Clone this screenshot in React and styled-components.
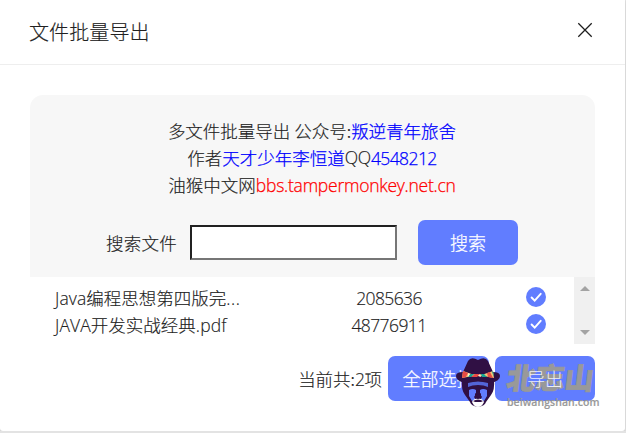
import React from "react";
import styled, { createGlobalStyle } from "styled-components";

const Global = createGlobalStyle`
  * { box-sizing: border-box; }
  body {
    margin: 0;
    background: #e3e3e3;
    overflow: hidden;
    color: #212121;
    font: 300 17.5px/27px "Noto Sans CJK SC", sans-serif;
    -webkit-text-stroke: 0.15px currentColor;
  }
`;

const Dialog = styled.main`
  position: relative;
  width: 625px;
  height: 431px;
  background: #fff;
  border-radius: 0 0 3px 3px;
  box-shadow: 0 1px 3px rgba(0, 0, 0, 0.12);
`;

const Header = styled.header`
  display: flex;
  align-items: center;
  justify-content: space-between;
  height: 65px;
  padding: 0 32px 2px 29px;
  border-bottom: 1px solid #eee;
`;

const Title = styled.h1`
  margin: 0;
  font-size: 20px;
  font-weight: 300;
  letter-spacing: 0.1px;
`;

const CloseButton = styled.button`
  display: flex;
  width: 16px;
  height: 16px;
  padding: 0;
  border: 0;
  background: none;
  margin-top: -2px;
`;

const Body = styled.section`
  padding: 30px 30px 0;
`;

const Panel = styled.div`
  height: 182px;
  padding-top: 22px;
  border-radius: 13px 13px 0 0;
  background: #f7f7f7;
`;

const InfoLine = styled.div`
  display: flex;
  justify-content: center;
  height: 27px;
  padding-right: 1px;
  white-space: pre;
`;

const Colored = styled.span`
  color: ${(p) => p.$color};
  -webkit-text-stroke: 0.25px ${(p) => p.$color};
`;

const Latin = styled.span`
  font-family: "Open Sans", sans-serif;
  font-size: 17.5px;
  letter-spacing: ${(p) => p.$spacing || 0}px;
`;

const SearchRow = styled.form`
  display: flex;
  align-items: center;
  height: 45px;
  margin-top: 22px;
  padding-left: 76px;
`;

const SearchLabel = styled.label`
  width: 84px;
  letter-spacing: 0.25px;
`;

const SearchInput = styled.input`
  width: 207px;
  height: 35px;
  margin-right: 21px;
  border: 2px solid;
  border-color: #212121 #767676 #767676 #212121;
  background: #fff;
  outline: 0;
`;

const Button = styled.button`
  flex: none;
  width: ${(p) => p.$width || 100}px;
  height: 45px;
  padding: 0;
  border: 0;
  border-radius: 7px;
  background: #617dff;
  color: #fff;
  font: 300 18px/27px "Noto Sans CJK SC", sans-serif;
  -webkit-text-stroke: 0.25px #fff;
  white-space: nowrap;
`;

const RaisedLabel = styled.span`
  position: relative;
  z-index: 2;
  opacity: 0.85;
  -webkit-text-stroke: 0;
`;

const ListArea = styled.div`
  display: flex;
  height: 67px;
`;

const List = styled.ul`
  flex: 1;
  margin: 0;
  padding: 7px 0 0 25px;
  list-style: none;
`;

const FileRow = styled.li`
  display: grid;
  grid-template-columns: 248px 172px 1fr;
  height: 27px;
`;

const FileSize = styled.div`
  text-align: center;
`;

const CheckCell = styled.div`
  padding: 3px 0 0 51px;
  line-height: 0;
`;

const Scrollbar = styled.div`
  display: flex;
  flex-direction: column;
  align-items: center;
  justify-content: space-between;
  width: 21px;
  padding: 9px 0;
  background: #f0f0f0;
`;

const Footer = styled.footer`
  display: flex;
  align-items: center;
  justify-content: flex-end;
  gap: 6px;
  margin-top: 12px;
`;

const Watermark = styled.div`
  position: absolute;
  z-index: 1;
  left: 456px;
  top: 357px;
  display: flex;
  gap: 7px;
  pointer-events: none;
`;

const BrandText = styled.div`
  display: flex;
  flex-direction: column;
  color: #999;
`;

const BrandName = styled.div`
  width: max-content;
  height: 38px;
  font-size: 29px;
  font-weight: 900;
  line-height: 38px;
  transform: skewX(-7deg);
  -webkit-text-stroke: 0.8px #999;
`;

const BrandUrl = styled.div`
  font: 600 10.5px/14px "Open Sans", sans-serif;
  letter-spacing: 0.05px;
`;

function CloseIcon() {
  return (
    <svg width="16" height="16" viewBox="0 0 16 16" stroke="#1d1d1d" strokeWidth="1.25" fill="none">
      <path d="M1.3 1.3 14.7 14.7M14.7 1.3 1.3 14.7" />
    </svg>
  );
}

function CheckIcon() {
  return (
    <svg width="20" height="20" viewBox="0 0 20 20">
      <circle cx="10" cy="10" r="10" fill="#617dff" />
      <path d="m5.6 10.5 3.1 3.2 6-6.9" fill="none" stroke="#fff" strokeWidth="1.9" strokeLinecap="round" />
    </svg>
  );
}

function Arrow({ down }) {
  return (
    <svg width="10" height="5" viewBox="0 0 10 5">
      <path d={down ? "M0 0h10L5 5z" : "M0 5h10L5 0z"} fill="#a3a3a3" />
    </svg>
  );
}

function HatLogo() {
  return (
    <svg width="44" height="51" viewBox="0 0 44 51">
      <path d="M6 22Q5 33 9 38l5 7q1 4 8 5 7-1 8-5l5-7q4-5 3-16z" fill="#301044" />
      <path d="M12 26q10-3 20 0v4q-4-2-10-2t-10 2z" fill="#5365d8" />
      <path d="M13 33q4-2 7 0v4l-2 3 2 3-4 1-3-5zM31 33q-4-2-7 0v4l2 3-2 3 4 1 3-5z" fill="#617dff" />
      <path d="m19 36 3 2 3-2v4l-3 1-3-1z" fill="#301044" />
      <path d="M16 45q2-4 6-3 4-1 6 3-2 5-6 5t-6-5" fill="#fff" />
      <path d="M17 44q5-3 10 0l-2 1h-6z" fill="#301044" />
      <path d="M0 19q0-4 7-4L12 4q3-5 10-1 7-4 10 1l5 11q7 0 7 4 0 5-9 7-13-4-26 0-9-2-9-7" fill="#301044" />
      <path d="M7 14q15 7 30 0l1 7q-16-4-32 0z" fill="#f2c57a" />
      <path d="m7 14 5 2-2 4-4 1zM19 17l5 0-3 3-6 0zM31 16l3-1 3 6-5-1z" fill="#e84b45" />
      <path d="m14 17 4 0-3 3-3 0zM25 17l3 0 3 3-5 0zM36 15l1-1 1 6z" fill="#16a394" />
      <path d="m12 16 2 1-2 3zM22 19l2-2 1 3z" fill="#fff1d0" />
    </svg>
  );
}

const files = [
  { name: <><Latin $spacing={0.1}>Java</Latin>编程思想第四版完<Latin $spacing={0.5}>...</Latin></>, size: "2085636" },
  { name: <><Latin $spacing={0.1}>JAVA</Latin>开发实战经典<Latin $spacing={0.15}>.pdf</Latin></>, size: "48776911" },
];

export default function App() {
  return (
    <>
      <Global />
      <Dialog>
        <Header>
          <Title>文件批量导出</Title>
          <CloseButton aria-label="关闭"><CloseIcon /></CloseButton>
        </Header>
        <Body>
          <Panel>
            <InfoLine>多文件批量导出 公众号:<Colored $color="#0000ff">叛逆青年旅舍</Colored></InfoLine>
            <InfoLine>
              作者<Colored $color="#0000ff">天才少年李恒道</Colored>
              <Latin $spacing={-0.3}>QQ</Latin>
              <Colored $color="#0000ff"><Latin $spacing={-0.6}>4548212</Latin></Colored>
            </InfoLine>
            <InfoLine>
              油猴中文网<Colored $color="#ff0000"><Latin $spacing={-0.25}>bbs.tampermonkey.net.cn</Latin></Colored>
            </InfoLine>
            <SearchRow>
              <SearchLabel htmlFor="search">搜索文件</SearchLabel>
              <SearchInput id="search" />
              <Button type="button">搜索</Button>
            </SearchRow>
          </Panel>
          <ListArea>
            <List>
              {files.map((f) => (
                <FileRow key={f.size}>
                  <div>{f.name}</div>
                  <FileSize><Latin $spacing={-0.6}>{f.size}</Latin></FileSize>
                  <CheckCell><CheckIcon /></CheckCell>
                </FileRow>
              ))}
            </List>
            <Scrollbar><Arrow /><Arrow down /></Scrollbar>
          </ListArea>
          <Footer>
            <span>当前共:<Latin $spacing={-0.5}>2</Latin>项</span>
            <Button $width={101}>全部选择</Button>
            <Button><RaisedLabel>导出</RaisedLabel></Button>
          </Footer>
        </Body>
        <Watermark>
          <HatLogo />
          <BrandText>
            <BrandName>北忘山</BrandName>
            <BrandUrl>beiwangshan.com</BrandUrl>
          </BrandText>
        </Watermark>
      </Dialog>
    </>
  );
}
